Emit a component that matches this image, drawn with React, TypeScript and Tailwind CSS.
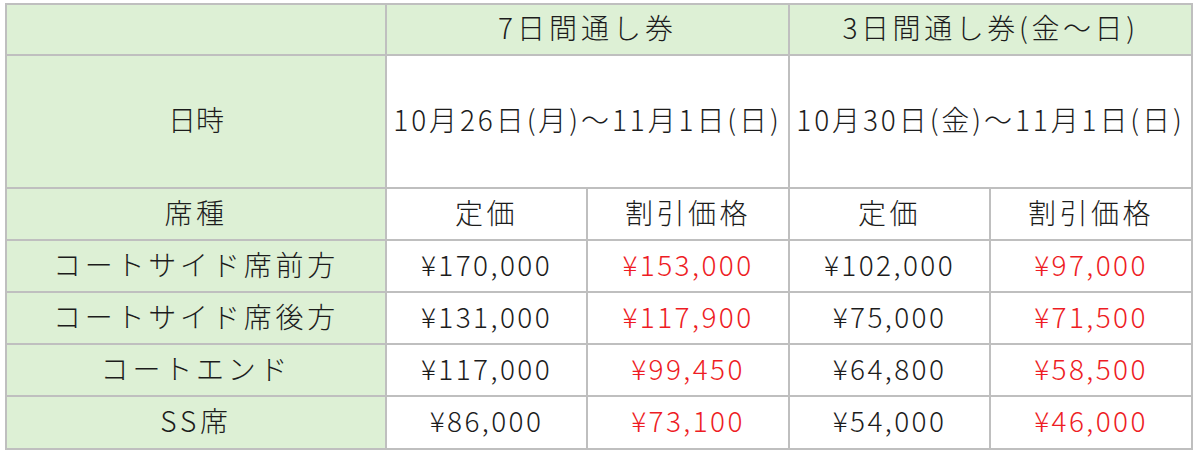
import React from 'react';

const GREEN = 'bg-[#ddf0d5]';

type Row = {
  seat: string;
  week: string;
  weekSale: string;
  three: string;
  threeSale: string;
};

const rows: Row[] = [
  { seat: 'コートサイド席前方', week: '¥170,000', weekSale: '¥153,000', three: '¥102,000', threeSale: '¥97,000' },
  { seat: 'コートサイド席後方', week: '¥131,000', weekSale: '¥117,900', three: '¥75,000', threeSale: '¥71,500' },
  { seat: 'コートエンド', week: '¥117,000', weekSale: '¥99,450', three: '¥64,800', threeSale: '¥58,500' },
  { seat: 'SS席', week: '¥86,000', weekSale: '¥73,100', three: '¥54,000', threeSale: '¥46,000' },
];

const Cell = ({
  children,
  className = '',
}: {
  children?: React.ReactNode;
  className?: string;
}) => (
  <div className={`flex items-center justify-center whitespace-nowrap overflow-visible pb-[5px] ${className}`}>
    {children}
  </div>
);

export default function App() {
  return (
    <div className="h-[454px] w-[1198px] bg-white pl-[5px] pt-[3px]">
      <div
        className="grid w-[1188px] gap-[2px] bg-[#bfbfbf] p-[2px] text-[28px] font-light leading-none text-[#1c1c1c]"
        style={{
          fontFamily: '"Noto Sans CJK JP", "Noto Sans", sans-serif',
          gridTemplateColumns: '378px 199px 200px 199px 200px',
          gridTemplateRows: '49px 131px 50px 50px 50px 50px 51px',
        }}
      >
        {/* header */}
        <Cell className={GREEN} />
        <Cell className={`${GREEN} col-span-2 tracking-[4px]`}>7日間通し券</Cell>
        <Cell className={`${GREEN} col-span-2 tracking-[3.6px]`}>3日間通し券(金～日)</Cell>

        {/* dates */}
        <Cell className={GREEN}>日時</Cell>
        <Cell className="col-span-2 bg-white tracking-[2.9px]">10月26日(月)～11月1日(日)</Cell>
        <Cell className="col-span-2 bg-white tracking-[2.9px]">10月30日(金)～11月1日(日)</Cell>

        {/* seat heading */}
        <Cell className={`${GREEN} tracking-[3.5px]`}>席種</Cell>
        <Cell className="bg-white tracking-[3.5px]">定価</Cell>
        <Cell className="bg-white tracking-[3.5px]">割引価格</Cell>
        <Cell className="bg-white tracking-[3.5px]">定価</Cell>
        <Cell className="bg-white tracking-[3.5px]">割引価格</Cell>

        {rows.map((r) => (
          <React.Fragment key={r.seat}>
            <Cell className={`${GREEN} tracking-[3.8px]`}>{r.seat}</Cell>
            <Cell className="bg-white tracking-[2.4px]">{r.week}</Cell>
            <Cell className="bg-white tracking-[2.4px] text-[#ee1c24]">{r.weekSale}</Cell>
            <Cell className="bg-white tracking-[2.4px]">{r.three}</Cell>
            <Cell className="bg-white tracking-[2.4px] text-[#ee1c24]">{r.threeSale}</Cell>
          </React.Fragment>
        ))}
      </div>
    </div>
  );
}
